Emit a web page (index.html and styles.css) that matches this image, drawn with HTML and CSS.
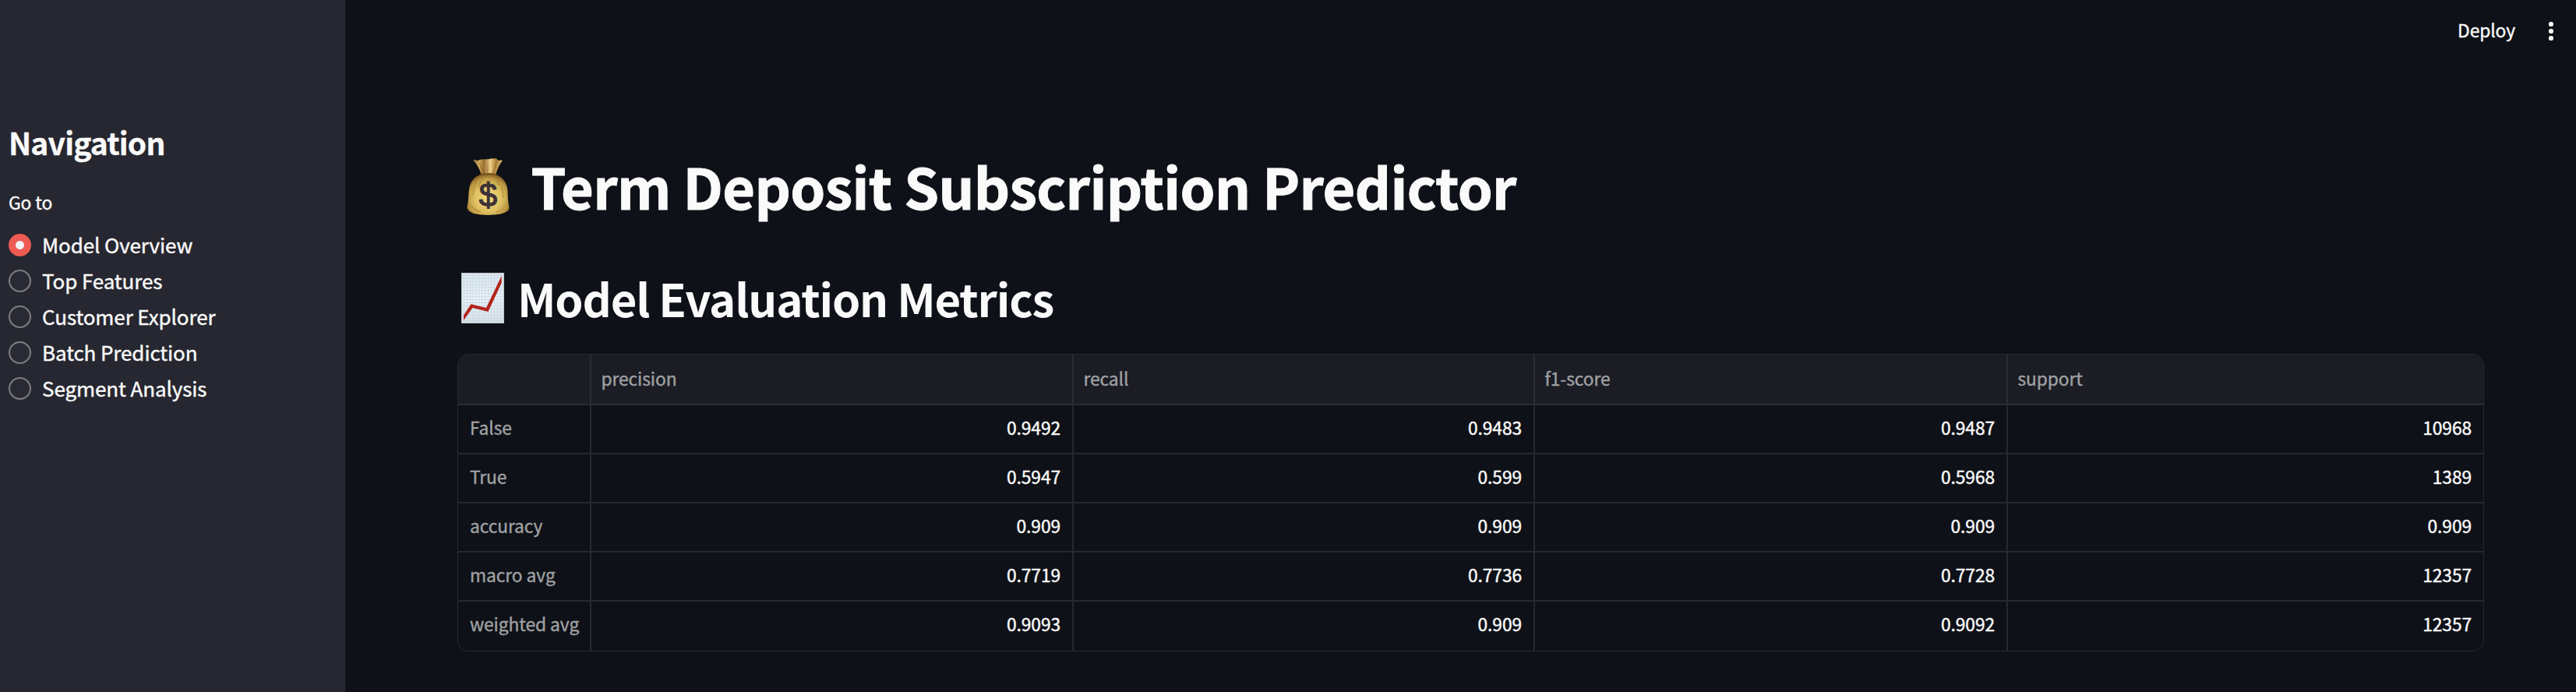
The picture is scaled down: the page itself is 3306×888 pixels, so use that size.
FILE: index.html
```html
<!DOCTYPE html>
<html lang="en">
<head>
<meta charset="utf-8">
<title>Term Deposit Subscription Predictor</title>
<link rel="stylesheet" href="styles.css">
</head>
<body>
<div class="app">
  <aside class="sidebar">
    <h2 class="nav-title">Navigation</h2>
    <p class="nav-label">Go to</p>
    <ul class="options">
      <li class="option"><i class="radio radio-on"></i><span>Model Overview</span></li>
      <li class="option"><i class="radio"></i><span>Top Features</span></li>
      <li class="option"><i class="radio"></i><span>Customer Explorer</span></li>
      <li class="option"><i class="radio"></i><span>Batch Prediction</span></li>
      <li class="option"><i class="radio"></i><span>Segment Analysis</span></li>
    </ul>
  </aside>
  <main class="main">
    <header class="toolbar">
      <span class="deploy">Deploy</span>
      <svg class="menu" width="8" height="26" viewBox="0 0 8 26" fill="#fafafa"><circle cx="4" cy="4" r="3.1"/><circle cx="4" cy="13" r="3.1"/><circle cx="4" cy="22" r="3.1"/></svg>
    </header>
    <section class="content">
      <h1 class="title">
        <svg class="bag" width="55" height="73" viewBox="0 0 55 73">
          <defs>
            <radialGradient id="body" cx=".5" cy=".6" r=".58"><stop offset="0" stop-color="#f3dc80"/><stop offset=".55" stop-color="#dfc162"/><stop offset=".85" stop-color="#bd9a42"/><stop offset="1" stop-color="#876326"/></radialGradient>
            <linearGradient id="neck" x1="0" x2="1" y1="0" y2="0"><stop offset="0" stop-color="#8a6a35"/><stop offset=".2" stop-color="#d0a957"/><stop offset=".38" stop-color="#9c7132"/><stop offset=".58" stop-color="#efd18a"/><stop offset=".75" stop-color="#b98b3f"/><stop offset="1" stop-color="#e0bb6e"/></linearGradient>
          </defs>
          <path fill="url(#neck)" d="M8 2.5Q11 2 14 3.200Q17 1 21 1.500L28 1.200Q33-.5 38 .5Q39 2 41 3Q44 2 46 3Q40 10 37 22H19Q15 9 8 2.500Z"/>
          <path fill="#8b642c" opacity=".5" d="M15 4Q21 10 23 20H20Q18 10 15 4ZM27 3L28 18L26 19ZM38 2Q36 10 32 20H35Q37 10 41 4Z"/>
          <path fill="url(#body)" d="M18 21Q28 19 37 21C46 24 52 31 52.500 42C52.700 52 53 57 54.500 63C55 68 49 70 44 71.500C34 73.500 19 73.500 9 71C3 69 0 66 .5 62C2.500 56 2 49 2.800 42C4 30 9 24 18 21Z"/>
          <path fill="none" stroke="#a27d34" stroke-width="1.500" opacity=".5" d="M18 23Q9 31 8 48M23 23Q17 29 15 38M36 23Q46 32 47 51M33 23Q38 28 42 35M3 58Q8 66 18 69M52 58Q47 67 38 69"/>
          <path fill="none" stroke="#79541f" stroke-width="1.800" d="M18 21Q28 19 37 21"/>
          <text class="dollar" x="27.500" y="62" text-anchor="middle">$</text>
        </svg>
        <span>Term Deposit Subscription Predictor</span>
      </h1>
      <h2 class="subtitle">
        <svg class="chart" width="55" height="65" viewBox="0 0 55 65">
          <defs>
            <linearGradient id="paper" x1="0" x2="0" y1="0" y2="1"><stop offset="0" stop-color="#dfe6ea"/><stop offset=".5" stop-color="#f0f4f7"/><stop offset="1" stop-color="#dbe0e3"/></linearGradient>
            <pattern id="grid" width="3.900" height="3.900" patternUnits="userSpaceOnUse"><path d="M3.400 0V3.900M0 3.400H3.900" fill="none" stroke="#bfd7e8" stroke-width=".8"/></pattern>
          </defs>
          <rect width="55" height="65" fill="url(#paper)"/>
          <rect width="55" height="65" fill="url(#grid)"/>
          <rect x=".5" y=".5" width="54" height="64" fill="none" stroke="#bfc5c8"/>
          <path fill="#b3231b" d="M3 54.500L12.500 40.200L32 45L51.700 4V13L34.500 50L14.500 45L3 61Z"/>
        </svg>
        <span>Model Evaluation Metrics</span>
      </h2>
      <div class="table">
        <div class="row head"><span></span><span>precision</span><span>recall</span><span>f1-score</span><span>support</span></div>
        <div class="row"><span>False</span><span>0.9492</span><span>0.9483</span><span>0.9487</span><span>10968</span></div>
        <div class="row"><span>True</span><span>0.5947</span><span>0.599</span><span>0.5968</span><span>1389</span></div>
        <div class="row"><span>accuracy</span><span>0.909</span><span>0.909</span><span>0.909</span><span>0.909</span></div>
        <div class="row"><span>macro avg</span><span>0.7719</span><span>0.7736</span><span>0.7728</span><span>12357</span></div>
        <div class="row"><span>weighted avg</span><span>0.9093</span><span>0.909</span><span>0.9092</span><span>12357</span></div>
      </div>
    </section>
  </main>
</div>
</body>
</html>
```
FILE: styles.css
```css
* { box-sizing: border-box; }
body {
  margin: 0;
  background: #0e1117;
  color: #fafafa;
  font-family: "Noto Sans CJK JP", "Noto Sans CJK SC", sans-serif;
}
.app { display: flex; height: 888px; overflow: hidden; }

.sidebar {
  flex: 0 0 443px;
  padding: 154px 0 0 11px;
  background: #262730;
  border-bottom: 1px solid #29212f;
}
.nav-title {
  margin: 0;
  font-size: 39px;
  font-weight: 700;
  line-height: 56px;
  letter-spacing: -0.85px;
  -webkit-text-stroke: 0.3px;
}
.nav-label {
  margin: 30px 0 0;
  font-size: 22.8px;
  line-height: 40px;
  letter-spacing: -0.1px;
  -webkit-text-stroke: 0.4px;
}
.options { list-style: none; margin: 11px 0 0; padding: 0; }
.option {
  display: flex;
  align-items: center;
  gap: 14px;
  height: 46px;
  font-size: 26px;
  line-height: 46px;
  letter-spacing: -0.1px;
  -webkit-text-stroke: 0.4px;
}
.radio {
  width: 29px;
  height: 29px;
  margin-top: 1px;
  border: 2px solid #7d7e81;
  border-radius: 50%;
  background: #292a34;
}
.radio-on { border: 9px solid #ee5b53; background: #f0f2f6; }

.main { flex: 1; border-bottom: 1px solid #0a0a10; }
.toolbar {
  display: flex;
  justify-content: flex-end;
  align-items: center;
  height: 80px;
  padding-right: 28px;
}
.deploy {
  margin: 0 42px 2px 0;
  font-size: 22.8px;
  line-height: 40px;
  letter-spacing: -0.1px;
  -webkit-text-stroke: 0.4px;
}
.content { padding: 108px 118px 0 144px; }
.title, .subtitle { display: flex; align-items: center; margin: 0; font-weight: 700; }
.title { height: 100px; font-size: 72px; line-height: 100px; letter-spacing: -0.6px; -webkit-text-stroke: 1px; }
.bag { margin: 3px 27.5px 0 12px; }
.dollar { font: 42px "Liberation Sans", sans-serif; letter-spacing: 0; fill: #3d3236; stroke: #3d3236; stroke-width: 1.2px; -webkit-text-stroke: 1.2px #3d3236; }
.subtitle { height: 80px; margin-top: 54px; font-size: 58px; line-height: 80px; letter-spacing: -1.15px; }
.chart { margin: 1px 17px 0 5px; }

.table {
  margin-top: 32px;
  border: 1px solid #27292d;
  border-radius: 14px;
  overflow: hidden;
  font-size: 22.8px;
  letter-spacing: -0.1px;
}
.row {
  display: grid;
  grid-template-columns: 171px 619px 592px 607px 1fr;
  height: 63px;
  line-height: 58px;
}
.row span {
  padding: 0 15px;
  border-right: 2px solid #27292d;
  border-bottom: 2px solid #27292d;
  text-align: right;
  -webkit-text-stroke: 0.4px;
}
.row span:last-child { border-right: 0; }
.row:last-child span { border-bottom: 0; }
.row span:first-child { padding: 0 0 0 15px; color: #9fa0a2; text-align: left; white-space: nowrap; }
.head { height: 65px; line-height: 62px; }
.head span { padding: 0 12.5px; background: #1b1c24; border-color: #2c2d33; color: #9fa0a2; text-align: left; }
```
